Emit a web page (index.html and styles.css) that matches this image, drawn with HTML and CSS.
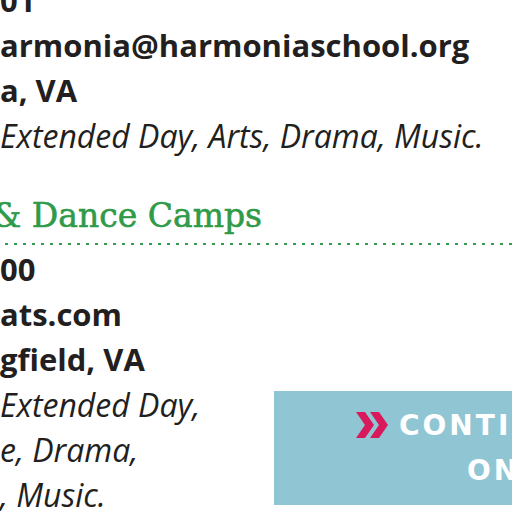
FILE: index.html
```html
<!DOCTYPE html>
<html>
<head>
<meta charset="utf-8">
<link rel="stylesheet" href="styles.css">
</head>
<body>
<div class="page">
  <section class="listing">
    <p class="line bold">01</p>
    <p class="line bold">armonia@harmoniaschool.org</p>
    <p class="line bold">a, VA</p>
    <p class="line ital">Extended Day, Arts, Drama, Music.</p>
  </section>
  <h2 class="heading">&amp; Dance Camps</h2>
  <section class="listing two-col">
    <div class="info">
      <p class="line bold">00</p>
      <p class="line bold">ats.com</p>
      <p class="line bold">gfield, VA</p>
      <p class="line ital">Extended Day,</p>
      <p class="line ital">e, Drama,</p>
      <p class="line ital">, Music.</p>
    </div>
    <a class="cta" href="#">
      <span class="cta-line first"><svg class="chev" viewBox="0 0 32 26" width="32" height="26"><path d="M0 0h9l9 13-9 13H0l9-13z M14 0h9l9 13-9 13h-9l9-13z" fill="#d8195b"/></svg>CONTINUE</span>
      <span class="cta-line second">ONLINE</span>
    </a>
  </section>
</div>
</body>
</html>
```
FILE: styles.css
```css
html, body {
  margin: 0;
  padding: 0;
  background: #ffffff;
  overflow: hidden;
}
.page {
  width: 512px;
  height: 512px;
  overflow: hidden;
  font-family: "Open Sans", "Noto Sans", sans-serif;
  color: #231f20;
}
.listing {
  margin-top: -22px;
}
.line {
  margin: 0;
  font-size: 31px;
  line-height: 45px;
  white-space: nowrap;
}
.bold {
  font-weight: 700;
}
.ital {
  font-style: italic;
  font-weight: 400;
  font-size: 32px;
}
.heading {
  margin: 0;
  padding: 35px 0 8px;
  font-family: "DejaVu Serif", serif;
  font-weight: 400;
  font-size: 33px;
  line-height: 45px;
  color: #2f9a48;
  -webkit-text-stroke: 0.6px #2f9a48;
  white-space: nowrap;
  text-indent: -8px;
  background-image: radial-gradient(circle, #2f9a48 1.1px, transparent 1.5px);
  background-size: 9px 4px;
  background-repeat: repeat-x;
  background-position: 2px 100%;
}
.two-col {
  margin-top: 1px;
  display: grid;
  grid-template-columns: 274px 1fr;
}
.cta {
  align-self: end;
  margin-bottom: 12px;
  height: 114px;
  background: #90c6d4;
  color: #ffffff;
  text-decoration: none;
  font-family: "DejaVu Sans", sans-serif;
  font-weight: 700;
  font-size: 28px;
  letter-spacing: 3px;
  line-height: 45px;
  display: flex;
  flex-direction: column;
  padding-top: 12px;
  box-sizing: border-box;
  white-space: nowrap;
}
.cta-line {
  display: block;
}
.cta-line.first {
  padding-left: 82px;
}
.cta-line.second {
  padding-left: 193px;
}
.chev {
  vertical-align: -3px;
  margin-right: 11px;
}
```
